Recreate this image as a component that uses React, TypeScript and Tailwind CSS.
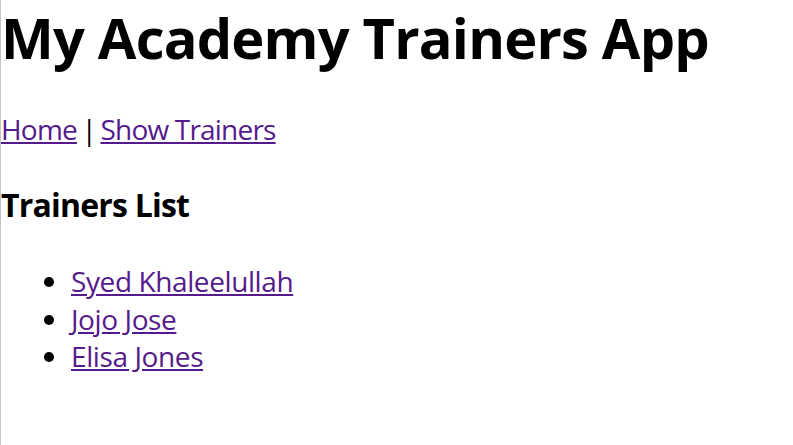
export default function App() {
  const font = { fontFamily: '"Open Sans", "Noto Sans", sans-serif' };
  return (
    <div className="h-[445px] w-[793px] overflow-hidden bg-white border-l border-[#c4c4c4] text-black" style={font}>
      <h1 className="m-0 text-[56px] leading-[74px] font-bold whitespace-nowrap tracking-[-0.8px]">My Academy Trainers App</h1>
      <div className="mt-[36px] text-[28px] leading-[38px] tracking-[-0.8px] [word-spacing:-2px]">
        <a href="#" className="text-[#551a8b] underline">Home</a> | <a href="#" className="text-[#551a8b] underline [word-spacing:0px]">Show Trainers</a>
      </div>
      <h3 className="mt-[35px] text-[32px] leading-[44px] font-bold tracking-[-0.8px]">Trainers List</h3>
      <ul className="mt-[36px] list-disc pl-[70px] text-[28px] leading-[37.5px] tracking-[-0.4px]">
        <li><a href="#" className="text-[#551a8b] underline">Syed Khaleelullah</a></li>
        <li><a href="#" className="text-[#551a8b] underline">Jojo Jose</a></li>
        <li><a href="#" className="text-[#551a8b] underline">Elisa Jones</a></li>
      </ul>
    </div>
  );
}
